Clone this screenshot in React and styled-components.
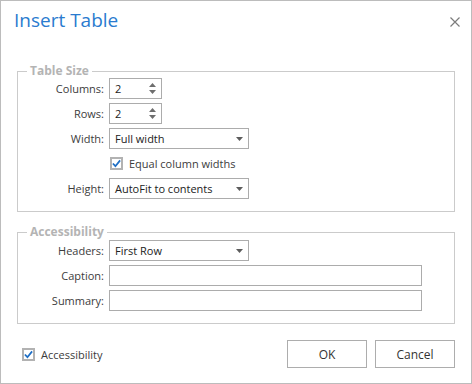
import React from "react";
import styled, { createGlobalStyle } from "styled-components";

/**********
 STYLES
*********/

const GlobalStyle = createGlobalStyle`
  body {
    margin: 0;
    font-family: "Open Sans", "Noto Sans", sans-serif;
    background: #fff;
  }
`;

const Dialog = styled.div`
  width: 472px;
  height: 384px;
  box-sizing: border-box;
  border: 1px solid #bcbcbc;
  background: #fff;
  display: flex;
  flex-direction: column;
`;

const Header = styled.div`
  display: flex;
  justify-content: space-between;
  align-items: flex-start;
  height: 63px;
  flex-shrink: 0;
  padding: 5px 10px 0 13px;
  box-sizing: border-box;
`;

const Title = styled.h1`
  margin: 0;
  font-size: 19px;
  font-weight: 400;
  line-height: 28px;
  color: #2a7bcf;
`;

const CloseButton = styled.button`
  border: 0;
  background: none;
  padding: 0;
  margin-top: 10px;
  width: 12px;
  height: 12px;
  display: flex;
  cursor: pointer;
`;

const Group = styled.fieldset`
  margin: 0 16px;
  padding: 0 0 ${(p) => p.$bottom}px 0;
  border: 1px solid #cbcbcb;
  & + & {
    margin-top: 13px;
  }
`;

const Legend = styled.legend`
  margin-left: 9px;
  padding: 0 3px;
  font-size: 12px;
  line-height: 14px;
  font-weight: 700;
  color: #b4b4b4;
`;

const Grid = styled.div`
  display: grid;
  grid-template-columns: 86px 1fr;
  grid-auto-rows: 21px;
  column-gap: 5px;
  row-gap: 4px;
  align-items: center;
  padding-top: ${(p) => p.$top}px;
`;

const Label = styled.label`
  text-align: right;
  font-size: 11px;
  color: #3c3c3c;
`;

const Field = styled.div`
  width: ${(p) => p.$width}px;
  height: 21px;
  box-sizing: border-box;
  border: 1px solid #acacac;
  display: flex;
  align-items: center;
  justify-content: space-between;
  padding: 0 5px 0 5px;
  font-size: 11px;
  color: #222;
`;

const Spinner = styled.div`
  display: flex;
  flex-direction: column;
  gap: 3px;
`;

const CheckRow = styled.label`
  grid-column: 2;
  display: flex;
  align-items: center;
  gap: 6px;
  font-size: 11px;
  color: #3c3c3c;
  padding-left: ${(p) => p.$indent || 0}px;
`;

const Box = styled.span`
  width: 13px;
  height: 13px;
  box-sizing: border-box;
  border: 2px solid #b2b2b2;
  display: flex;
  align-items: center;
  justify-content: center;
  background: #fff;
`;

const Footer = styled.div`
  display: flex;
  align-items: center;
  justify-content: space-between;
  padding: 16px 16px 0 21px;
`;

const Buttons = styled.div`
  display: flex;
  gap: 8px;
`;

const Button = styled.button`
  width: 80px;
  height: 28px;
  border: 1px solid #adadad;
  background: #fff;
  font-family: inherit;
  font-size: 12px;
  color: #333;
`;

/************
  PARTS
************/

const Arrow = ({ up, color = "#5c5c5c" }) => (
  <svg width="7" height="4" viewBox="0 0 7 4">
    <path d={up ? "M0 4 L3.5 0 L7 4 Z" : "M0 0 L7 0 L3.5 4 Z"} fill={color} />
  </svg>
);

const Check = () => (
  <Box>
    <svg width="10" height="9" viewBox="0 0 10 9">
      <path d="M1 4.5 L3.8 7.5 L9 1" fill="none" stroke="#1f6fc5" strokeWidth="2" />
    </svg>
  </Box>
);

const SpinBox = ({ value }) => (
  <Field $width={53}>
    <span>{value}</span>
    <Spinner>
      <Arrow up color="#6e6e6e" />
      <Arrow color="#6e6e6e" />
    </Spinner>
  </Field>
);

const Select = ({ value }) => (
  <Field $width={140}>
    <span>{value}</span>
    <Arrow />
  </Field>
);

export default function App() {
  return (
    <>
      <GlobalStyle />
      <Dialog>
        <Header>
          <Title>Insert Table</Title>
          <CloseButton aria-label="Close">
            <svg width="12" height="12" viewBox="0 0 12 12">
              <path d="M1.5 1.5 L10.5 10.5 M10.5 1.5 L1.5 10.5" stroke="#7c7c7c" strokeWidth="1.2" />
            </svg>
          </CloseButton>
        </Header>

        <Group $bottom={12}>
          <Legend>Table Size</Legend>
          <Grid $top={0}>
            <Label>Columns:</Label>
            <SpinBox value="2" />
            <Label>Rows:</Label>
            <SpinBox value="2" />
            <Label>Width:</Label>
            <Select value="Full width" />
            <CheckRow $indent={1}>
              <Check />
              Equal column widths
            </CheckRow>
            <Label>Height:</Label>
            <Select value="AutoFit to contents" />
          </Grid>
        </Group>

        <Group $bottom={12}>
          <Legend>Accessibility</Legend>
          <Grid $top={1}>
            <Label>Headers:</Label>
            <Select value="First Row" />
            <Label>Caption:</Label>
            <Field $width={313} />
            <Label>Summary:</Label>
            <Field $width={313} />
          </Grid>
        </Group>

        <Footer>
          <CheckRow>
            <Check />
            Accessibility
          </CheckRow>
          <Buttons>
            <Button>OK</Button>
            <Button>Cancel</Button>
          </Buttons>
        </Footer>
      </Dialog>
    </>
  );
}
